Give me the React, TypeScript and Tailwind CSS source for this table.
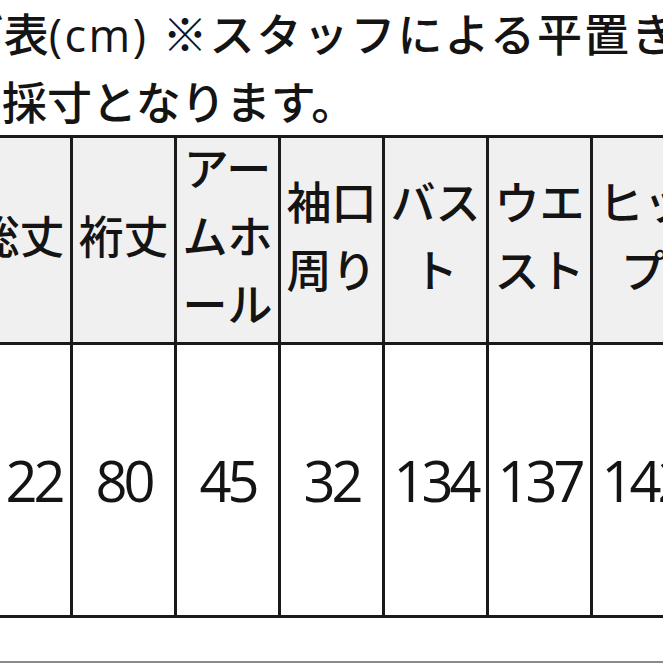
import React from "react";

const headers: string[][] = [
  ["総丈"],
  ["裄丈"],
  ["アー", "ムホ", "ール"],
  ["袖口", "周り"],
  ["バス", "ト"],
  ["ウエ", "スト"],
  ["ヒッ", "プ"],
];

const values = ["122", "80", "45", "32", "134", "137", "142"];

export default function App() {
  return (
    <div className="w-[663px] h-[663px] overflow-hidden bg-white text-[#141414] flex flex-col">
      <div className="font-['Noto_Sans_CJK_JP',sans-serif] font-medium text-[45px] leading-[66px] whitespace-nowrap">
        <div className="ml-[-130px]">
          <span>サイズ表</span>
          <span className="font-['Open_Sans',sans-serif] tracking-[2.5px]">(cm)</span>
          <span className="ml-[14px] tracking-[2px]">※スタッフによる平置き</span>
        </div>
        <div className="ml-[2px]">採寸となります。</div>
      </div>
      <div className="mt-[1px] ml-[-31px] flex flex-col border-y-[3px] border-[#1a1a1a]">
        <div className="flex h-[207px] border-b-[3px] border-[#1a1a1a] bg-[#f0f0f0]">
          {headers.map((lines, i) => (
            <div
              key={i}
              className="w-[104px] shrink-0 border-r-[3px] border-[#1a1a1a] flex flex-col items-center justify-center pb-[10px] font-['Noto_Sans_CJK_JP',sans-serif] font-medium text-[45px] leading-[68px] whitespace-nowrap"
            >
              {lines.map((l, j) => (
                <div key={j}>{l}</div>
              ))}
            </div>
          ))}
        </div>
        <div className="flex h-[270px] bg-white">
          {values.map((v, i) => (
            <div
              key={i}
              className="w-[104px] shrink-0 border-r-[3px] border-[#1a1a1a] flex items-center justify-center font-['Open_Sans',sans-serif] text-[56px] leading-none tracking-[-4px] whitespace-nowrap"
            >
              <span>{v}</span>
            </div>
          ))}
        </div>
      </div>
      <div className="flex-1" />
      <div className="h-[2px] bg-[#8a8a8a]" />
    </div>
  );
}
